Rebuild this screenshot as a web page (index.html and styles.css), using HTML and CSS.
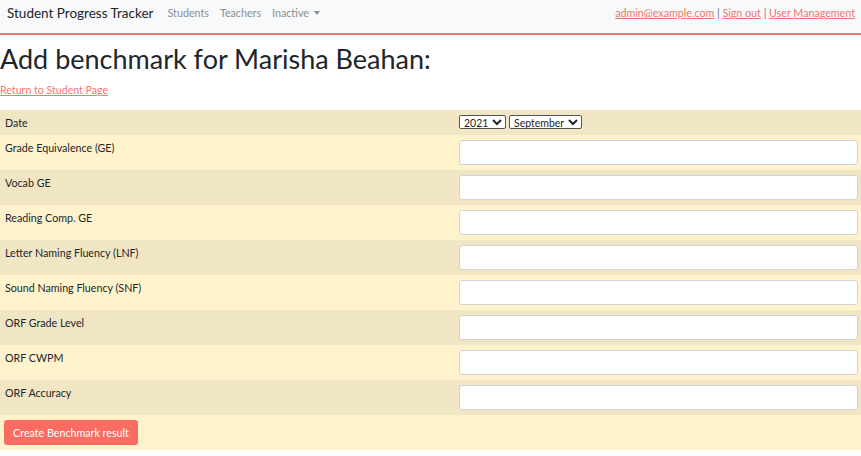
FILE: index.html
```html
<!DOCTYPE html>
<html>
<head>
<meta charset="utf-8">
<link rel="stylesheet" href="styles.css">
</head>
<body>
<nav class="navbar">
  <div class="nav-left">
    <span class="brand">Student Progress Tracker</span>
    <a class="nav-link" href="#">Students</a>
    <a class="nav-link" href="#">Teachers</a>
    <a class="nav-link dropdown" href="#">Inactive <span class="caret"></span></a>
  </div>
  <div class="nav-right">
    <a href="#">admin@example.com</a> <span class="sep">|</span> <a href="#">Sign out</a> <span class="sep">|</span> <a href="#">User Management</a>
  </div>
</nav>
<h1 class="title">Add benchmark for Marisha Beahan:</h1>
<a class="back" href="#">Return to Student Page</a>
<form class="form">
  <div class="row dark short">
    <div class="label">Date</div>
    <div class="field">
      <select class="sel"><option>2021</option></select>
      <select class="sel"><option>September</option></select>
    </div>
  </div>
  <div class="row light"><div class="label">Grade Equivalence (GE)</div><div class="field"><input class="inp" type="text"></div></div>
  <div class="row dark"><div class="label">Vocab GE</div><div class="field"><input class="inp" type="text"></div></div>
  <div class="row light"><div class="label">Reading Comp. GE</div><div class="field"><input class="inp" type="text"></div></div>
  <div class="row dark"><div class="label">Letter Naming Fluency (LNF)</div><div class="field"><input class="inp" type="text"></div></div>
  <div class="row light"><div class="label">Sound Naming Fluency (SNF)</div><div class="field"><input class="inp" type="text"></div></div>
  <div class="row dark"><div class="label">ORF Grade Level</div><div class="field"><input class="inp" type="text"></div></div>
  <div class="row light"><div class="label">ORF CWPM</div><div class="field"><input class="inp" type="text"></div></div>
  <div class="row dark"><div class="label">ORF Accuracy</div><div class="field"><input class="inp" type="text"></div></div>
  <div class="row light btnrow"><button class="btn" type="button">Create Benchmark result</button></div>
</form>
</body>
</html>
```

FILE: styles.css
```css
* { box-sizing: border-box; }
body {
  margin: 0;
  font-family: Lato, "Open Sans", sans-serif;
  color: #212529;
  background: #fff;
}
.navbar {
  height: 35px;
  background: #f8f9fa;
  border-bottom: 2px solid #e57d72;
  display: flex;
  align-items: center;
  justify-content: space-between;
  padding: 0 6px 8px 7px;
}
.nav-left { display: flex; align-items: center; }
.brand { font-size: 13.5px; color: #212529; margin-right: 14px; }
.nav-link {
  font-size: 10.7px;
  color: #8a8e92;
  text-decoration: none;
  margin-right: 11px;
}
.caret {
  display: inline-block;
  width: 0; height: 0;
  border-left: 3px solid transparent;
  border-right: 3px solid transparent;
  border-top: 4px solid #8a8e92;
  vertical-align: 2px;
  margin-left: 2px;
}
.nav-right { font-size: 10.7px; color: #6c757d; }
.nav-right a { color: #e8776e; text-decoration: underline; }
.sep { color: #6c757d; }
.title {
  font-size: 27px;
  font-weight: 400;
  margin: 7px 0 8px 0;
  line-height: 33px;
}
.back {
  display: block;
  font-size: 10.6px;
  color: #ee7a72;
  text-decoration: underline;
  margin-bottom: 13px;
  line-height: 14px;
}
.form { display: block; }
.row {
  display: grid;
  grid-template-columns: 454px 1fr;
  height: 35px;
}
.row.short { height: 25px; }
.dark { background: #f1e6c4; }
.light { background: #fff3cd; }
.label {
  font-size: 10.7px;
  padding: 5px 5px;
  line-height: 15px;
}
.field { padding: 5px 3px 5px 5px; display: flex; align-items: flex-start; gap: 3px; }
.sel {
  font-family: Lato, sans-serif;
  font-size: 10.5px;
  height: 14px;
  padding: 0;
  border: 1px solid #555;
  border-radius: 2px;
  background: #fff;
  color: #212529;
}
.inp {
  width: 100%;
  height: 25px;
  border: 1px solid #d3d3d3;
  border-radius: 3px;
  background: #fff;
}
.btnrow { display: block; padding: 5px 4px; }
.btn {
  font-family: Lato, sans-serif;
  font-size: 10.7px;
  color: #fff;
  background: #f96c62;
  border: none;
  border-radius: 3px;
  height: 25px;
  width: 134px;
  padding: 0;
}
```
